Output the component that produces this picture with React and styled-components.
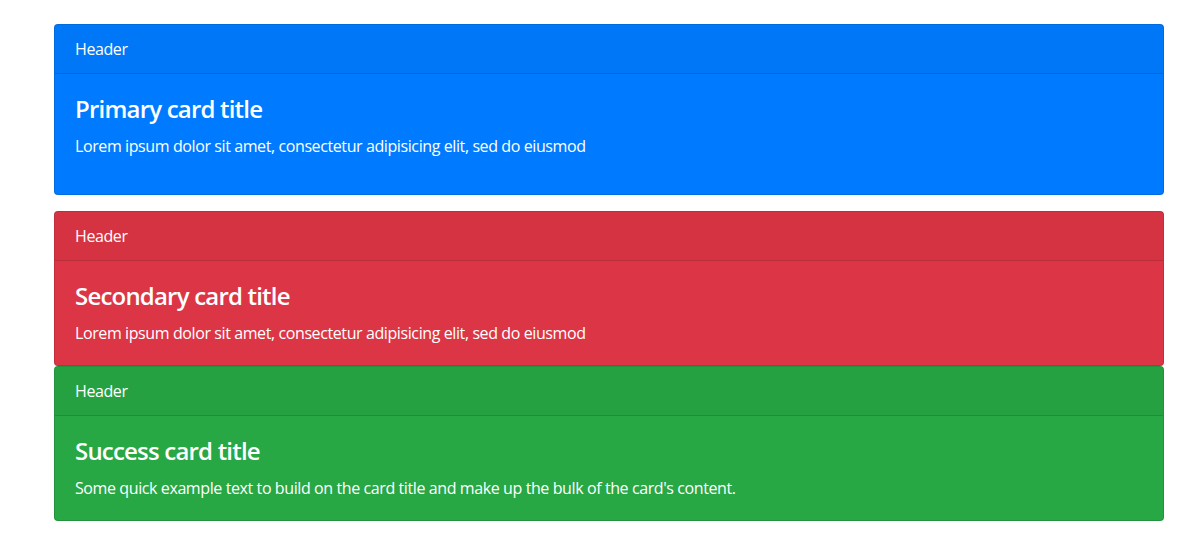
import React from 'react';
import styled, { createGlobalStyle } from 'styled-components';

const GlobalStyle = createGlobalStyle`
  html, body {
    margin: 0;
    padding: 0;
    background: #fff;
  }
  body {
    font-family: 'Open Sans', 'Noto Sans', sans-serif;
    font-size: 16px;
    line-height: 1.5;
    color: #212529;
  }
`;

const Container = styled.div`
  width: 1110px;
  padding: 24px 0 0 54px;
  display: flex;
  flex-direction: column;
`;

const Card = styled.div`
  display: flex;
  flex-direction: column;
  background: ${p => p.bg};
  color: #fff;
  border: 1px solid rgba(0, 0, 0, 0.125);
  border-radius: 4px;
  margin-bottom: ${p => (p.spaced ? '16px' : '0')};
  overflow: hidden;
`;

const CardHeader = styled.div`
  padding: 12px 20px;
  background: rgba(0, 0, 0, 0.03);
  border-bottom: 1px solid rgba(0, 0, 0, 0.125);
  font-size: 16px;
  line-height: 24px;
  letter-spacing: -0.4px;
`;

const CardBody = styled.div`
  padding: 20px;
`;

const CardTitle = styled.h4`
  margin: 0 0 12px;
  font-size: 24px;
  font-weight: 600;
  line-height: 28px;
  letter-spacing: -0.8px;
  padding-top: 1px;
  height: 28px;
  box-sizing: border-box;
`;

const CardText = styled.p`
  margin: 0 0 ${p => (p.last ? '0' : '16px')};
  font-size: 16px;
  line-height: 24px;
  letter-spacing: -0.4px;
`;

const cards = [
  {
    bg: '#007bff',
    title: 'Primary card title',
    text: 'Lorem ipsum dolor sit amet, consectetur adipisicing elit, sed do eiusmod',
    last: false,
    spaced: true,
  },
  {
    bg: '#dc3545',
    title: 'Secondary card title',
    text: 'Lorem ipsum dolor sit amet, consectetur adipisicing elit, sed do eiusmod',
    last: true,
  },
  {
    bg: '#28a745',
    title: 'Success card title',
    text: "Some quick example text to build on the card title and make up the bulk of the card's content.",
    last: true,
  },
];

const App = () => {
  return (
    <>
      <GlobalStyle />
      <Container>
        {cards.map(c => (
          <Card key={c.title} bg={c.bg} spaced={c.spaced}>
            <CardHeader>Header</CardHeader>
            <CardBody>
              <CardTitle>{c.title}</CardTitle>
              <CardText last={c.last}>{c.text}</CardText>
            </CardBody>
          </Card>
        ))}
      </Container>
    </>
  );
};

export default App;
